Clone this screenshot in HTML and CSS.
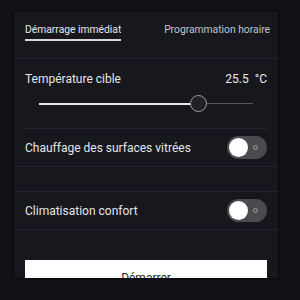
FILE: index.html
```html
<!DOCTYPE html>
<html lang="fr">
<head>
<meta charset="utf-8">
<link rel="stylesheet" href="styles.css">
</head>
<body>
<div class="card">
  <div class="tabs">
    <div class="tab active">Démarrage immédiat</div>
    <div class="tab">Programmation horaire</div>
  </div>
  <div class="temp">
    <div class="temp-head">
      <span class="label">Température cible</span>
      <span class="value">25.5&nbsp; °C</span>
    </div>
    <div class="slider">
      <div class="track">
        <div class="fill" style="width:74.4%"></div>
        <div class="thumb" style="left:74.4%"></div>
      </div>
    </div>
  </div>
  <div class="row first">
    <span class="label">Chauffage des surfaces vitrées</span>
    <div class="toggle"><span class="knob"></span><span class="dot"></span></div>
  </div>
  <div class="spacer"></div>
  <div class="row">
    <span class="label">Climatisation confort</span>
    <div class="toggle"><span class="knob"></span><span class="dot"></span></div>
  </div>
  <div class="actions">
    <button class="start">Démarrer</button>
  </div>
</div>
</body>
</html>
```

FILE: styles.css
```css
html, body {
  margin: 0;
  padding: 0;
  background: #111318;
  width: 300px;
  height: 300px;
  overflow: hidden;
  font-family: Roboto, "Noto Sans", sans-serif;
}
.card {
  margin: 12px 0 0 14px;
  width: 264px;
  height: 266px;
  background: #16181e;
  box-shadow: 0 0 3px 1px rgba(0, 0, 0, 0.55);
  overflow: hidden;
  display: flex;
  flex-direction: column;
}
.card > * {
  flex-shrink: 0;
}
.tabs {
  height: 47px;
  box-sizing: border-box;
  border-bottom: 1px solid #24272d;
  display: flex;
  justify-content: space-between;
  align-items: flex-start;
  padding: 11px 8px 0 11px;
}
.tab {
  font-size: 10.3px;
  color: #c4c6ca;
  line-height: 13px;
  padding-bottom: 3px;
}
.tab.active {
  color: #e8e8ea;
  border-bottom: 2px solid #d8d8d8;
}
.tab:last-child {
  margin-right: -0px;
}
.temp {
  margin: 0 11px;
  height: 70px;
  box-sizing: border-box;
  border-bottom: 1px solid #24272d;
  display: flex;
  flex-direction: column;
  padding-top: 11px;
}
.temp-head {
  display: flex;
  justify-content: space-between;
  align-items: center;
  height: 17px;
}
.label {
  font-size: 12px;
  color: #e4e5e8;
}
.value {
  font-size: 12px;
  color: #e8e9ec;
}
.slider {
  padding: 0 14px;
  margin-top: 17px;
}
.track {
  position: relative;
  height: 1px;
  background: #56585d;
}
.fill {
  height: 2px;
  margin-top: -1px;
  background: #e8e8e8;
}
.thumb {
  position: absolute;
  top: -8px;
  width: 17px;
  height: 17px;
  box-sizing: border-box;
  margin-left: -8.5px;
  border-radius: 50%;
  border: 1.5px solid #9c9ea2;
  background: #1f2125;
}
.row {
  height: 38px;
  box-sizing: border-box;
  border-bottom: 1px solid #23262c;
  display: flex;
  align-items: center;
  justify-content: space-between;
  padding: 0 11px;
}
.row.first {
  height: 38px;
}
.spacer {
  height: 25px;
  box-sizing: border-box;
  border-bottom: 1px solid #23262c;
}
.toggle {
  width: 40px;
  height: 23px;
  border-radius: 12px;
  background: #4a4b4e;
  display: flex;
  align-items: center;
  justify-content: space-between;
  padding: 0 9px 0 2px;
  box-sizing: border-box;
}
.knob {
  width: 19px;
  height: 19px;
  border-radius: 50%;
  background: #ffffff;
}
.dot {
  width: 5px;
  height: 5px;
  box-sizing: border-box;
  border-radius: 50%;
  border: 1.2px solid #a6a7aa;
}
.actions {
  padding: 30px 11px 0;
}
.start {
  display: block;
  width: 100%;
  height: 36px;
  border: 0;
  background: #ffffff;
  color: #1d1f24;
  font-family: Roboto, "Noto Sans", sans-serif;
  font-size: 12px;
  padding: 0;
}
```
